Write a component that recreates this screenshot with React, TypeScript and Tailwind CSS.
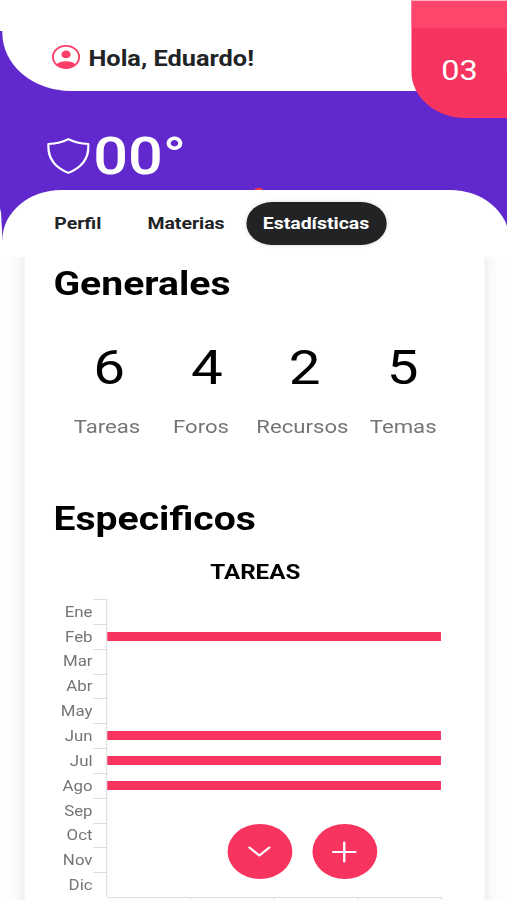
import React from 'react';

interface Stat {
  value: number;
  label: string;
  className: string;
}

interface MonthRow {
  label: string;
  value: number;
}

const stats: Stat[] = [
  { value: 6, label: 'Tareas', className: 'w-[91.5px]' },
  { value: 4, label: 'Foros', className: 'w-[68px]' },
  { value: 2, label: 'Recursos', className: 'w-[104px]' },
  { value: 5, label: 'Temas', className: 'w-[67px]' },
];

const months: MonthRow[] = [
  { label: 'Ene', value: 0 },
  { label: 'Feb', value: 1 },
  { label: 'Mar', value: 0 },
  { label: 'Abr', value: 0 },
  { label: 'May', value: 0 },
  { label: 'Jun', value: 1 },
  { label: 'Jul', value: 1 },
  { label: 'Ago', value: 1 },
  { label: 'Sep', value: 0 },
  { label: 'Oct', value: 0 },
  { label: 'Nov', value: 0 },
  { label: 'Dic', value: 0 },
];

function ContactIcon() {
  return (
    <svg viewBox="0 0 24 24" className="h-6 w-6" fill="none">
      <circle cx="12" cy="12" r="11.1" stroke="#fb3f68" strokeWidth="1.6" />
      <circle cx="12" cy="9.4" r="3.9" fill="#fb3f68" />
      <path d="M4 19.4C5.5 17.4 8.2 16.200 12 16.200s6.500 1.200 8 3.200A11 11 0 0 1 12 23.200a11 11 0 0 1-8-3.800z" fill="#fb3f68" />
    </svg>
  );
}

function ShieldIcon() {
  return (
    <svg viewBox="0 0 36 36" className="h-9 w-9" fill="none" stroke="white" strokeWidth="2" strokeLinejoin="round">
      <path d="M18 1.200C13.500 4 7.500 5.600 1 6c-.6 13.500 5.500 23.500 17 28.800C29.500 29.500 35.600 19.500 35 6 28.500 5.600 22.500 4 18 1.200z" />
    </svg>
  );
}

function Header() {
  return (
    <div className="h-[190px] bg-[#6028cd]">
      <div className="h-[31px] bg-white" />
      <div className="ml-[2px] flex h-[60px] items-start rounded-bl-[58px] bg-white pl-[42px] pt-[14px]">
        <ContactIcon />
        <h1 className="ml-[7px] mt-px text-[21.5px] font-bold leading-[25px] text-[#212325]">Hola, Eduardo!</h1>
      </div>
      <div className="flex items-start pl-[40px] pt-[36px] text-white">
        <div className="mt-[11px]">
          <ShieldIcon />
        </div>
        <span className="ml-[3px] text-[52px] font-medium leading-[60px]">00°</span>
      </div>
    </div>
  );
}

function Tabs() {
  return (
    <div className="relative z-10 bg-[linear-gradient(#6028cd_50px,white_50px)]">
      <div className="-mr-[2px] ml-[2px] flex h-[67px] items-start rounded-t-[50px] bg-white pt-[12px] text-[16.5px] font-bold leading-[43px] text-[#212325]">
        <span className="w-[81px] pl-[44px]">Perfil</span>
        <span className="ml-[42px] w-[83.5px]">Materias</span>
        <span className="h-[43px] w-[119px] rounded-full bg-[#212325] text-center text-white shadow-[0_0_4px_rgba(0,0,0,0.15)]">
          Estadísticas
        </span>
      </div>
      {/* left edge highlight */}
      <svg viewBox="0 0 3 40" preserveAspectRatio="none" className="absolute left-0 top-[18px] h-[40px] w-[3px]" fill="white">
        <path d="M0 0L.9 5 2.200 34 3 40H0z" />
      </svg>
      {/* notification dot peeking over the tab bar */}
      <div className="absolute -top-[2px] left-[215.5px] h-[2px] w-[7px] rounded-t-full bg-[#f5364f]" />
    </div>
  );
}

function Chart() {
  return (
    <div className="ml-[24.5px] mt-[14px] w-[330px]">
      {months.map((month) => (
        <div key={month.label} className="flex h-[24.85px]">
          <div className="flex w-[33px] items-center justify-end pt-px text-[14.3px] leading-none text-[#757575]">{month.label}</div>
          <div className="w-[12px] border-r border-t border-[#dedede]" />
          <div className="flex grow items-center">
            <div className="h-[9.3px] bg-[#f73360]" style={{ width: `${month.value * 283.5}px` }} />
          </div>
        </div>
      ))}
      <div className="ml-[45px] grid h-[6px] w-[284px] grid-cols-4 border-t border-[#dedede]">
        <div className="border-r border-[#dedede]" />
        <div className="border-r border-[#dedede]" />
        <div className="border-r border-[#dedede]" />
        <div className="border-r border-[#dedede]" />
      </div>
    </div>
  );
}

export default function App() {
  return (
    <div className="h-[900px] w-[507px] overflow-hidden bg-white font-['Roboto',sans-serif]">
      <div className="relative h-[900px] w-[430px] origin-left scale-x-[1.179] overflow-hidden">
        <Header />
        <Tabs />

        <div className="absolute right-0 top-0 h-[118px] w-[80.7px] overflow-hidden rounded-bl-[46px] bg-[#f73360]">
          <div className="h-[28px] border-t border-[#ffb3c4] bg-[#ff456b]" />
          <p className="mt-[26px] text-center text-[27.5px] leading-[33px] text-white">03</p>
        </div>

        <main className="-mt-[20px] ml-[21px] h-[700px] w-[390px] bg-white pt-[24px] text-black shadow-[0_0_6px_3px_rgba(0,0,0,0.04),0_0_24px_rgba(0,0,0,0.07)]">
          <h2 className="ml-[24.3px] text-[33.2px] font-bold leading-[46px]">Generales</h2>
          <div className="ml-[30px] mt-[31px] grid w-[332px] grid-cols-4 text-center text-[48px] leading-[60px]">
            {stats.map((stat) => (
              <p key={stat.label}>{stat.value}</p>
            ))}
          </div>
          <div className="ml-[24px] mt-[16px] flex text-center text-[18.8px] leading-[26px] text-[#757575]">
            {stats.map((stat) => (
              <p key={stat.label} className={stat.className}>{stat.label}</p>
            ))}
          </div>
          <h2 className="ml-[24.3px] mt-[56px] text-[33.2px] font-bold leading-[46px]">Especificos</h2>
          <h3 className="ml-px mt-[17px] text-center text-[20.5px] font-bold leading-[26px]">TAREAS</h3>
          <Chart />
        </main>

        <div className="absolute bottom-[21px] left-[192.5px] flex gap-[17px]">
          <button className="flex h-[55px] w-[55px] items-center justify-center rounded-full bg-[#f73360]">
            <svg viewBox="0 0 24 24" className="h-6 w-6" fill="none" stroke="white" strokeWidth="2" strokeLinecap="round" strokeLinejoin="round">
              <path d="M3.500 7.500l8.500 8 8.500-8" />
            </svg>
          </button>
          <button className="flex h-[55px] w-[55px] items-center justify-center rounded-full bg-[#f73360]">
            <svg viewBox="0 0 24 24" className="h-6 w-6" fill="none" stroke="white" strokeWidth="2" strokeLinecap="round">
              <path d="M12 2.500v19M2.500 12h19" />
            </svg>
          </button>
        </div>
      </div>
    </div>
  );
}
